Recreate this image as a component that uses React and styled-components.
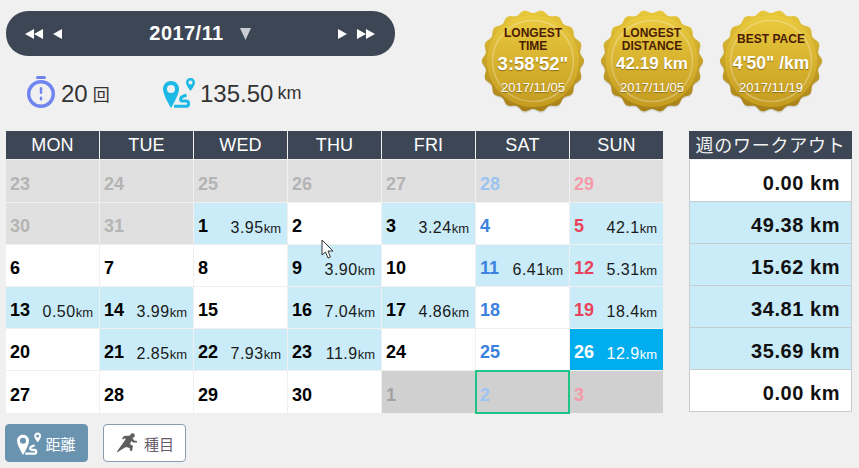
import React from 'react';
import styled, { createGlobalStyle } from 'styled-components';

const Global = createGlobalStyle`
  html, body { margin: 0; padding: 0; background: #f0f0f0; }
  body { font-family: "Liberation Sans", "Noto Sans CJK JP", sans-serif; }
`;

const Page = styled.div`
  position: relative;
  width: 859px;
  height: 468px;
  box-sizing: border-box;
  padding-left: 6px;
  overflow: hidden;
`;
const Top = styled.div`
  display: flex;
  height: 131px;
`;
const Left = styled.div`
  width: 389px;
  padding-top: 11px;
`;
const Nav = styled.div`
  height: 45px;
  border-radius: 22px;
  background: #3d4655;
  display: flex;
  align-items: center;
  justify-content: space-between;
  padding: 0 20px 0 19px;
  color: #fff;
`;
const NavGroup = styled.div`
  display: flex;
  align-items: center;
  gap: ${p => p.$gap || 0}px;
`;
const Month = styled.div`
  font-size: 20px;
  font-weight: bold;
  letter-spacing: .45px;
  margin-right: 16px;
`;
const Stats = styled.div`
  display: flex;
  align-items: center;
  margin-top: 20px;
  padding-left: 21px;
  color: #333;
`;
const Stat = styled.div`
  display: flex;
  align-items: center;
  width: ${p => p.$w}px;
`;
const StatValue = styled.span`
  font-size: 24px;
  margin-left: ${p => p.$ml}px;
  margin-top: 3px;
`;
const StatUnit = styled.span`
  font-size: ${p => p.$size}px;
  margin-left: ${p => p.$ml}px;
  margin-top: 3px;
`;
const Medals = styled.div`
  display: flex;
  gap: 17px;
  margin-left: 87px;
  padding-top: 12px;
`;
const MedalBox = styled.div`
  position: relative;
  width: 102px;
  height: 99px;
  display: flex;
  flex-direction: column;
  align-items: center;
  padding-top: 15px;
  box-sizing: border-box;
`;
const MedalArt = styled.svg`
  position: absolute;
  left: -4px;
  top: -3px;
`;
const MedalTitle = styled.div`
  position: relative;
  height: 25px;
  display: flex;
  align-items: center;
  justify-content: center;
  text-align: center;
  font-size: 12px;
  line-height: 12.5px;
  font-weight: bold;
  color: #4a1c02;
`;
const MedalValue = styled.div`
  position: relative;
  height: 23px;
  line-height: 23px;
  white-space: nowrap;
  font-size: ${p => p.$size}px;
  font-weight: bold;
  color: #fff;
  text-shadow: 0 1px 1px rgba(90,60,0,.55);
`;
const MedalDate = styled.div`
  position: relative;
  margin-top: 4px;
  font-size: 13px;
  line-height: 18px;
  color: #fff;
  text-shadow: 0 1px 1px rgba(90,60,0,.5);
`;
const Main = styled.div`
  display: flex;
  align-items: flex-start;
  gap: 26px;
`;
const Calendar = styled.div`
  display: grid;
  grid-template-columns: repeat(7, 93px);
  grid-template-rows: 28px 42px repeat(4, 41px) 42px;
  gap: 1px;
  width: 657px;
`;
const HeadCell = styled.div`
  background: #3d4655;
  color: #fff;
  font-size: 18px;
  letter-spacing: .2px;
  display: flex;
  align-items: center;
  justify-content: center;
`;
const bgs = { other: '#e0e0e0', run: '#c9ecf8', plain: '#fff', today: '#00aeef', next: '#d0d0d0' };
const Cell = styled.div`
  position: relative;
  box-sizing: border-box;
  background: ${p => bgs[p.$kind]};
  display: flex;
  align-items: center;
  justify-content: space-between;
  padding: 6px 6px 0 4px;
  ${p => p.$selected && 'outline: 2px solid #1fc386; outline-offset: -1px; z-index: 1;'}
`;
const DayNum = styled.span`
  font-size: 18px;
  font-weight: bold;
  color: ${p => p.$color};
`;
const Dist = styled.span`
  font-size: 16px;
  letter-spacing: .5px;
  margin-top: 3px;
  color: ${p => p.$light ? '#fff' : '#1a1a1a'};
  white-space: nowrap;
`;
const DistUnit = styled.span`
  font-size: 13px;
  letter-spacing: 0;
`;
const Week = styled.div`
  width: 163px;
  display: flex;
  flex-direction: column;
`;
const WeekHead = styled.div`
  height: 28px;
  box-sizing: border-box;
  margin-bottom: 1px;
  padding-bottom: 3px;
  background: #3d4655;
  color: #f2f2f2;
  font-size: 18px;
  letter-spacing: .75px;
  display: flex;
  align-items: center;
  justify-content: center;
  white-space: nowrap;
`;
const WeekRow = styled.div`
  box-sizing: border-box;
  height: 42px;
  background: ${p => p.$on ? '#c9ecf8' : '#fff'};
  border: 1px solid #c6ccd0;
  border-top: none;
  display: flex;
  align-items: center;
  justify-content: flex-end;
  padding: 6px 11px 0 0;
  font-size: 20px;
  font-weight: bold;
  letter-spacing: .55px;
  color: #111;
`;
const Buttons = styled.div`
  display: flex;
  gap: 15px;
  margin: 11px 0 0 -1px;
`;
const Toggle = styled.div`
  width: 83px;
  height: 38px;
  box-sizing: border-box;
  border-radius: 4px;
  display: flex;
  align-items: center;
  justify-content: center;
  gap: ${p => p.$active ? 4 : 7}px;
  padding-left: ${p => p.$active ? 0 : 2}px;
  font-size: 15px;
  background: ${p => p.$active ? '#6a93b0' : '#fff'};
  color: ${p => p.$active ? '#fff' : '#67606c'};
  border: 1px solid ${p => p.$active ? '#6a93b0' : '#8a9bb0'};
`;
const Pointer = styled.svg`
  position: absolute;
  left: 321px;
  top: 239px;
  z-index: 2;
`;

const Tri = ({ dir = 'r', w = 9, h = 10, fill = '#fff' }) => (
  <svg width={w} height={h} viewBox="0 0 9 11" preserveAspectRatio="none">
    <polygon fill={fill} points={dir === 'r' ? '0,0 9,5.5 0,11' : dir === 'l' ? '9,0 0,5.5 9,11' : '0,0 9,0 4.5,11'} />
  </svg>
);
const RouteIcon = ({ color, hole, size = 32 }) => (
  <svg width={size} height={size} viewBox="0 0 32 32">
    <path fill={color} d="M8 5C3.500 5 0 8.500 0 13c0 6 8 19 8 19s8-13 8-19c0-4.500-3.500-8-8-8z" />
    <circle cx="8" cy="13" r="4" fill={hole} />
    <path fill={color} d="M27.500 2c-2.700 0-4.500 2-4.500 4.500 0 3 4.500 8.500 4.500 8.500s4.500-5.500 4.500-8.500c0-2.500-1.800-4.500-4.500-4.500z" />
    <circle cx="27.500" cy="6.500" r="2" fill={hole} />
    <path fill="none" stroke={color} strokeWidth="3" d="M11 30.300h12c3.500 0 3.500-5.300 0-5.300h-3.500c-2.500 0-2.500-3.500 0-4.300l4-1.700" />
  </svg>
);
const Stopwatch = () => (
  <svg width="28" height="32" viewBox="0 0 28 32">
    <rect x="9" y="0" width="10" height="3" rx="1.500" fill="#6f84ee" />
    <circle cx="14" cy="18" r="12.300" fill="none" stroke="#6f84ee" strokeWidth="3.400" />
    <rect x="12.800" y="11" width="2.400" height="7" rx="1.200" fill="#6f84ee" />
    <rect x="12.800" y="20.500" width="2.400" height="4" rx="1.200" fill="#6f84ee" />
  </svg>
);
const Runner = () => (
  <svg width="20" height="20" viewBox="0 0 20 20">
    <circle cx="15.500" cy="2.500" r="2.300" fill="#5e5e5e" />
    <path fill="#5e5e5e" d="M7 3L13 2.500L15 4L17 7.500L20 8L20 9.500L16 9.500L14.500 8L13 11L16 13L15 18L13.500 18L12.500 15L9 14L5.500 16L0 19.500L0 18.500L3.500 13.500L8.500 6.500L8 5L6 6.500L5 5.500Z" />
  </svg>
);

const scallop = (cx, cy, R, amp, n) => {
  const pts = [];
  for (let i = 0; i < 360; i++) {
    const t = (i / 360) * Math.PI * 2;
    const r = R + amp * Math.cos(n * t);
    pts.push(`${(cx + r * Math.cos(t)).toFixed(2)},${(cy + r * Math.sin(t)).toFixed(2)}`);
  }
  return pts.join(' ');
};

const Medal = ({ id, title, value, size, date }) => (
  <MedalBox>
    <MedalArt width="110" height="106" viewBox="0 0 110 106">
      <defs>
        <linearGradient id={`g${id}`} x1="0" y1="0" x2="0" y2="1">
          <stop offset="0" stopColor="#ebcb3f" />
          <stop offset="1" stopColor="#c49b20" />
        </linearGradient>
        <linearGradient id={`e${id}`} x1="0" y1="0" x2="0" y2="1">
          <stop offset="0" stopColor="#e8c83c" />
          <stop offset="1" stopColor="#a67f17" />
        </linearGradient>
      </defs>
      <polygon points={scallop(55, 53.5, 49.5, 1.600, 18)} fill="#000" opacity=".1" />
      <polygon points={scallop(55, 52, 49.5, 1.600, 18)} fill={`url(#e${id})`} />
      <circle cx="55" cy="52" r="46" fill={`url(#g${id})`} />
      <circle cx="55" cy="52" r="40.500" fill="none" stroke="#fff" strokeOpacity=".28" strokeWidth="1.500" />
    </MedalArt>
    <MedalTitle>{title}</MedalTitle>
    <MedalValue $size={size}>{value}</MedalValue>
    <MedalDate>{date}</MedalDate>
  </MedalBox>
);

const C = { n: '#000', sat: '#3b82e0', sun: '#e8435a', g: '#b4b4b4', gs: '#9cc4f2', gu: '#f59aa8', w: '#fff', gn: '#a2a2a2' };
const colors = (kind, col) => {
  if (kind === 'today') return C.w;
  if (kind === 'other' || kind === 'next') {
    if (col === 5) return C.gs;
    if (col === 6) return C.gu;
    return kind === 'other' ? C.g : C.gn;
  }
  if (col === 5) return C.sat;
  if (col === 6) return C.sun;
  return C.n;
};
const days = [
  [[23,'other'],[24,'other'],[25,'other'],[26,'other'],[27,'other'],[28,'other'],[29,'other']],
  [[30,'other'],[31,'other'],[1,'run','3.95'],[2,'plain'],[3,'run','3.24'],[4,'plain'],[5,'run','42.1']],
  [[6,'plain'],[7,'plain'],[8,'plain'],[9,'run','3.90'],[10,'plain'],[11,'run','6.41'],[12,'run','5.31']],
  [[13,'run','0.50'],[14,'run','3.99'],[15,'plain'],[16,'run','7.04'],[17,'run','4.86'],[18,'plain'],[19,'run','18.4']],
  [[20,'plain'],[21,'run','2.85'],[22,'run','7.93'],[23,'run','11.9'],[24,'plain'],[25,'plain'],[26,'today','12.9']],
  [[27,'plain'],[28,'plain'],[29,'plain'],[30,'plain'],[1,'next'],[2,'next',null,true],[3,'next']],
];
const weeks = [['0.00',false],['49.38',true],['15.62',true],['34.81',true],['35.69',true],['0.00',false]];

export default function App() {
  return (
    <Page>
      <Global />
      <Top>
        <Left>
          <Nav>
            <NavGroup $gap={10}>
              <NavGroup><Tri dir="l" /><Tri dir="l" /></NavGroup>
              <Tri dir="l" />
            </NavGroup>
            <NavGroup $gap={0}>
              <Month>2017/11</Month>
              <Tri dir="d" w={11} h={12} fill="#c9ccd1" />
            </NavGroup>
            <NavGroup $gap={10}>
              <Tri />
              <NavGroup><Tri /><Tri /></NavGroup>
            </NavGroup>
          </Nav>
          <Stats>
            <Stat $w={136}>
              <Stopwatch />
              <StatValue $ml={6}>20</StatValue>
              <StatUnit $size={17} $ml={5}>回</StatUnit>
            </Stat>
            <Stat>
              <RouteIcon color="#1cb9e6" hole="#f0f0f0" />
              <StatValue $ml={5}>135.50</StatValue>
              <StatUnit $size={18} $ml={4}>km</StatUnit>
            </Stat>
          </Stats>
        </Left>
        <Medals>
          <Medal id="a" title={<span>LONGEST<br />TIME</span>} value={`3:58'52"`} size={18.5} date="2017/11/05" />
          <Medal id="b" title={<span>LONGEST<br />DISTANCE</span>} value="42.19 km" size={17} date="2017/11/05" />
          <Medal id="c" title="BEST PACE" value={`4'50" /km`} size={17.500} date="2017/11/19" />
        </Medals>
      </Top>
      <Main>
        <Calendar>
          {['MON','TUE','WED','THU','FRI','SAT','SUN'].map(d => <HeadCell key={d}>{d}</HeadCell>)}
          {days.flatMap((row, r) => row.map(([n, kind, dist, sel], c) => (
            <Cell key={`${r}-${c}`} $kind={kind} $selected={sel}>
              <DayNum $color={colors(kind, c)}>{n}</DayNum>
              {dist && <Dist $light={kind === 'today'}>{dist}<DistUnit>km</DistUnit></Dist>}
            </Cell>
          )))}
        </Calendar>
        <Week>
          <WeekHead>週のワークアウト</WeekHead>
          {weeks.map(([v, on], i) => <WeekRow key={i} $on={on}>{v} km</WeekRow>)}
        </Week>
      </Main>
      <Buttons>
        <Toggle $active><RouteIcon color="#fff" hole="#6a93b0" size={24} />距離</Toggle>
        <Toggle><Runner />種目</Toggle>
      </Buttons>
      <Pointer width="14" height="20" viewBox="0 0 14 20">
        <path d="M1 1v15l3.500-3 2.500 6 2.500-1-2.500-6h5z" fill="#fff" stroke="#333" strokeWidth="1" />
      </Pointer>
    </Page>
  );
}
